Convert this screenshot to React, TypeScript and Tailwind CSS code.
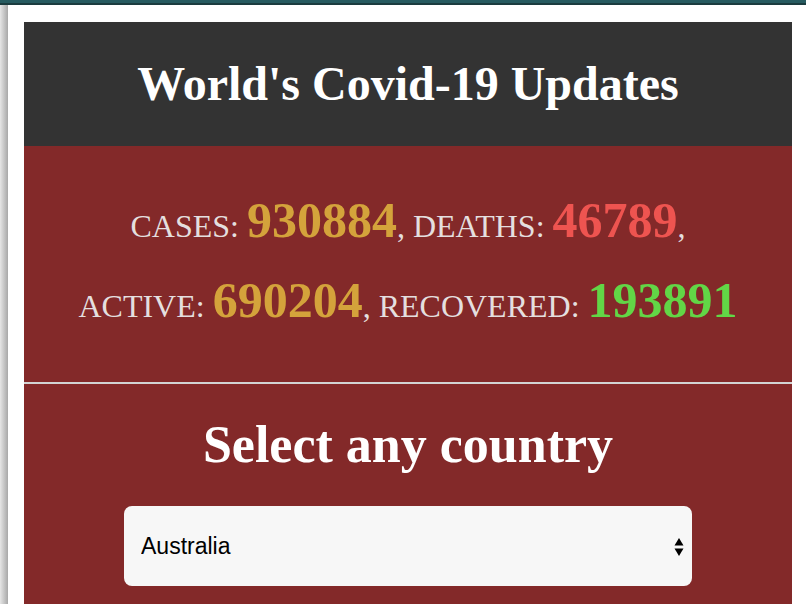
import { useState } from 'react';

interface Stat { label: string; value: number; color: string; }

const firstRow: Stat[] = [
  { label: 'CASES', value: 930884, color: 'text-[#d4a33b]' },
  { label: 'DEATHS', value: 46789, color: 'text-[#ee5450]' },
];

const secondRow: Stat[] = [
  { label: 'ACTIVE', value: 690204, color: 'text-[#d4a33b]' },
  { label: 'RECOVERED', value: 193891, color: 'text-[#62d646]' },
];

const countries = ['Australia', 'Brazil', 'Canada', 'China', 'France', 'Germany', 'India', 'Italy', 'Spain', 'USA'];

function StatItem({ stat }: { stat: Stat }) {
  return (
    <>
      {stat.label}:{' '}
      <span className={`text-[50px] font-bold leading-none ${stat.color}`}>{stat.value}</span>
    </>
  );
}

export default function App() {
  const [country, setCountry] = useState('Australia');

  return (
    <div className="min-h-screen bg-white font-['Liberation_Serif',serif]">
      {/* window chrome strip */}
      <div className="h-[3px] bg-[#275b60]" />
      <div className="h-[2px] bg-[#1b3c3f]" />

      <div className="flex h-[599px] overflow-hidden">
        <div className="w-[8px] shrink-0 bg-gradient-to-r from-[#e6e6e6] to-[#a8a8a8]" />

        <div className="flex-1 pl-[16px] pt-[17px]">
          <div className="w-[768px]">
            <header className="h-[124px] bg-[#333333] flex items-center justify-center">
              <h1 className="text-[48px] font-bold leading-none text-white">World's Covid-19 Updates</h1>
            </header>

            <section className="bg-[#832929] pt-10 pb-[36px] text-center text-[32px] leading-[80px] text-[#e4dfdf]">
              <StatItem stat={firstRow[0]} />, <StatItem stat={firstRow[1]} />,
              <br />
              <StatItem stat={secondRow[0]} />, <StatItem stat={secondRow[1]} />
            </section>

            <div className="h-[2px] bg-[#d3d3d3]" />

            <section className="bg-[#832929] pt-[35px] pb-[30px] flex flex-col items-center">
              <h2 className="text-[52px] font-bold leading-none text-white">Select any country</h2>

              <div className="relative mt-[35px] w-[568px]">
                <select
                  value={country}
                  onChange={e => setCountry(e.target.value)}
                  className="appearance-none w-full h-[80px] rounded-lg bg-[#f7f7f7] pl-[17px] pr-10 text-[23px] text-black font-['Liberation_Sans',Arial,sans-serif] outline-none"
                >
                  {countries.map(c => <option key={c} value={c}>{c}</option>)}
                </select>
                <svg className="absolute right-[8px] top-[31px] pointer-events-none" width="10" height="20" viewBox="0 0 10 20">
                  <path d="M5 1 L9.5 8.5 H0.5 Z" fill="#000" />
                  <path d="M0.5 11.5 H9.5 L5 19 Z" fill="#000" />
                </svg>
              </div>
            </section>
          </div>
        </div>
      </div>
    </div>
  );
}
